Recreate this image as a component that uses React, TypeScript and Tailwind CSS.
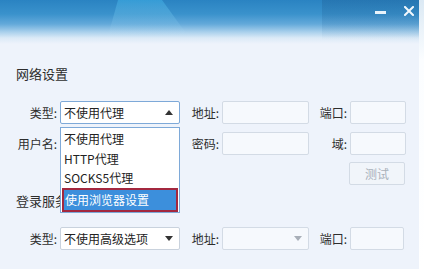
import React from "react";

const font = { fontFamily: '"Noto Sans CJK SC", "Noto Sans", sans-serif' };

function Label({ w, children }: { w: string; children: React.ReactNode }) {
  return (
    <div className={`${w} text-right text-[12px] leading-none text-[#2d2d2d] pr-[2px]`}>{children}</div>
  );
}

export default function App() {
  return (
    <div className="w-[424px] h-[269px] overflow-hidden flex bg-white" style={font}>
      <div className="relative w-[419px] h-[269px] bg-[#eef3fb] flex flex-col">
        {/* title bar */}
        <div className="relative h-[44px] bg-[linear-gradient(to_bottom,#2a83c2_0px,#3a92cc_14px,#63a9da_24px,#a9d0ec_32px,#dbeaf7_38px,#eef3fb_44px)] overflow-hidden">
          <svg className="absolute left-0 top-0" width="419" height="44">
            <defs>
              <linearGradient id="tri" x1="0" y1="0" x2="0" y2="1">
                <stop offset="0" stopColor="#3fb0e6" stopOpacity="0.55" />
                <stop offset="1" stopColor="#bfe6f7" stopOpacity="0" />
              </linearGradient>
              <linearGradient id="rt" x1="0" y1="0" x2="0" y2="1">
                <stop offset="0" stopColor="#1f5f95" stopOpacity="0.35" />
                <stop offset="1" stopColor="#1f5f95" stopOpacity="0" />
              </linearGradient>
            </defs>
            <polygon points="118,0 162,0 188,36 108,36" fill="url(#tri)" />
            <rect x="322" y="0" width="97" height="40" fill="url(#rt)" />
          </svg>
          <div className="absolute left-[375px] top-[11px] w-[11px] h-[3px] bg-[#e8f3fb]" />
          <svg className="absolute left-[404px] top-[6px]" width="10" height="10" viewBox="0 0 10 10">
            <path d="M1 1 L9 9 M9 1 L1 9" stroke="#f2f8fd" strokeWidth="2" strokeLinecap="square" />
          </svg>
        </div>

        {/* section 1 */}
        <div className="pl-[16px] mt-[22px] text-[13px] leading-[16px] text-[#2d2d2d]">网络设置</div>

        <div className="flex items-center h-[23px] mt-[19px]">
          <Label w="w-[59px]">类型:</Label>
          <div className="ml-[1px] w-[120px] h-[23px] border border-[#7ea9d8] bg-white rounded-[2px] flex items-center pl-[3px] pr-[6px] text-[12px] text-[#222]">
            <span className="flex-1">不使用代理</span>
            <span className="w-0 h-0 border-l-[4px] border-r-[4px] border-b-[5px] border-l-transparent border-r-transparent border-b-[#333]" />
          </div>
          <Label w="w-[41px]">地址:</Label>
          <div className="ml-[1px] w-[87px] h-[23px] border border-[#d3dbe5] bg-[#f6f9fd] rounded-[2px]" />
          <Label w="w-[40px]">端口:</Label>
          <div className="ml-[1px] w-[56px] h-[23px] border border-[#d3dbe5] bg-[#f6f9fd] rounded-[2px]" />
        </div>

        <div className="flex items-center h-[23px] mt-[8px]">
          <Label w="w-[59px]">用户名:</Label>
          <div className="ml-[1px] w-[120px]" />
          <Label w="w-[41px]">密码:</Label>
          <div className="ml-[1px] w-[87px] h-[23px] border border-[#d3dbe5] bg-[#f6f9fd] rounded-[2px]" />
          <Label w="w-[40px]">域:</Label>
          <div className="ml-[1px] w-[56px] h-[23px] border border-[#d3dbe5] bg-[#f6f9fd] rounded-[2px]" />
        </div>

        <div className="flex justify-end h-[23px] mt-[7px] pr-[14px]">
          <div className="w-[56px] h-[23px] border border-[#d3dbe5] bg-[#f1f5fa] rounded-[2px] flex items-center justify-center text-[12px] text-[#a9b1bb]">
            测试
          </div>
        </div>

        {/* section 2 */}
        <div className="pl-[16px] mt-[8px] text-[13px] leading-[16px] text-[#2d2d2d]">登录服务器</div>

        <div className="flex items-center h-[23px] mt-[18px]">
          <Label w="w-[59px]">类型:</Label>
          <div className="ml-[1px] w-[120px] h-[23px] border border-[#c9d2dd] bg-white rounded-[2px] flex items-center pl-[3px] pr-[6px] text-[12px] text-[#222]">
            <span className="flex-1">不使用高级选项</span>
            <span className="w-0 h-0 border-l-[4px] border-r-[4px] border-t-[5px] border-l-transparent border-r-transparent border-t-[#333]" />
          </div>
          <Label w="w-[41px]">地址:</Label>
          <div className="ml-[1px] w-[87px] h-[23px] border border-[#d3dbe5] bg-[#f6f9fd] rounded-[2px] flex items-center justify-end pr-[6px]">
            <span className="w-0 h-0 border-l-[4px] border-r-[4px] border-t-[5px] border-l-transparent border-r-transparent border-t-[#a8afb8]" />
          </div>
          <Label w="w-[40px]">端口:</Label>
          <div className="ml-[1px] w-[54px] h-[23px] border border-[#d3dbe5] bg-[#f6f9fd] rounded-[2px]" />
        </div>

        {/* dropdown list */}
        <div className="absolute left-[60px] top-[127px] w-[120px] h-[86px] border border-[#7ea9d8] bg-white flex flex-col pt-[1px] text-[12px] text-[#222]">
          <div className="h-[20px] flex items-center pl-[3px]">不使用代理</div>
          <div className="h-[20px] flex items-center pl-[3px]">HTTP代理</div>
          <div className="h-[20px] flex items-center pl-[3px]">SOCKS5代理</div>
          <div className="mx-[1px] h-[24px] border-2 border-[#a3283f] bg-[#3c8fdc] flex items-center pl-[1px] text-white">使用浏览器设置</div>
        </div>
      </div>
      <div className="w-[5px] h-[269px] bg-[linear-gradient(to_bottom,#dbe9f4,#fbfdff_60px,#ffffff)]" />
    </div>
  );
}
